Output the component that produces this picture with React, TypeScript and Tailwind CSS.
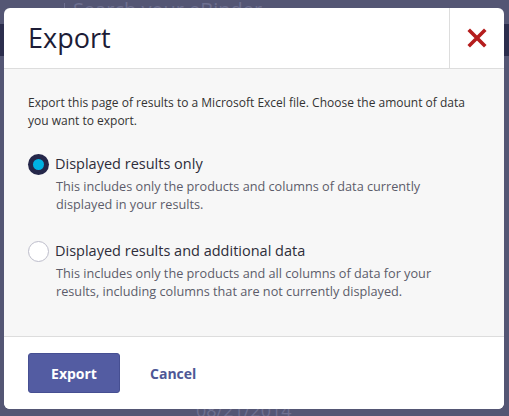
import React, { useState } from 'react';

const options = [
  {
    id: 'displayed',
    label: 'Displayed results only',
    description:
      'This includes only the products and columns of data currently displayed in your results.',
  },
  {
    id: 'all',
    label: 'Displayed results and additional data',
    description:
      'This includes only the products and all columns of data for your results, including columns that are not currently displayed.',
  },
];

const App: React.FC = () => {
  const [selected, setSelected] = useState('displayed');

  return (
    <div className="relative h-[416px] w-[509px] overflow-hidden bg-[#545674] font-['Open_Sans',sans-serif]">
      {/* Page behind the overlay */}
      <div className="flex h-[24px] items-center gap-3 pl-[40px] text-[20px] text-[#6e7090]">
        <span className="text-[12px]">▼</span>
        <span className="h-[18px] w-px bg-[#6e7090]" />
        <span className="-ml-1 -mt-1">Search your eBinder</span>
      </div>
      <div className="h-[32px] bg-[#2c2e4d]" />
      <div className="absolute bottom-[-8px] left-[196px] text-[18px] text-[#6e7090]">08/21/2014</div>

      {/* Modal */}
      <div className="absolute left-[4px] top-[8px] flex h-[401px] w-[500px] flex-col overflow-hidden rounded-[6px] bg-white">
        <div className="flex h-[61px] shrink-0 border-b border-[#dddddd]">
          <h1 className="flex flex-1 items-center pl-6 pt-[1px] text-[27px] font-normal text-[#1c1c36]">Export</h1>
          <button className="flex w-[55px] items-center justify-center border-l border-[#dddddd]">
            <svg width="20" height="20" viewBox="0 0 20 20">
              <path d="M3 3 L17 17 M17 3 L3 17" stroke="#b51d1d" strokeWidth="3.6" strokeLinecap="square" />
            </svg>
          </button>
        </div>

        <div className="flex-1 bg-[#f7f7f7] px-6 pt-[25px]">
          <p className="text-[12px] leading-[18px] text-[#333333]">
            Export this page of results to a Microsoft Excel file. Choose the amount of data you want to export.
          </p>
          <div className="mt-[23px] flex flex-col gap-[27px]">
            {options.map((o) => {
              const on = selected === o.id;
              return (
                <label key={o.id} className="flex cursor-pointer gap-[6px]" onClick={() => setSelected(o.id)}>
                  <span
                    className={`mt-[1px] flex h-[21px] w-[21px] shrink-0 items-center justify-center rounded-full ${
                      on ? 'bg-[#25274a]' : 'border border-[#bdbdcb] bg-white'
                    }`}
                  >
                    {on && <span className="h-[11px] w-[11px] rounded-full bg-[#00b2e3]" />}
                  </span>
                  <span className="flex flex-col">
                    <span className="text-[14.5px] leading-[22px] text-[#2d2d3a]">{o.label}</span>
                    <span className="mt-[2px] max-w-[400px] pl-[1px] text-[12.7px] leading-[18px] text-[#5c5c6a]">
                      {o.description}
                    </span>
                  </span>
                </label>
              );
            })}
          </div>
        </div>

        <div className="flex h-[73px] shrink-0 items-start gap-[30px] border-t border-[#dddddd] bg-white pl-6 pt-[16px]">
          <button className="h-[40px] w-[92px] rounded-[3px] border border-[#464f92] bg-[#535ca2] text-[14px] font-bold text-white">
            Export
          </button>
          <button className="h-[40px] text-[14px] font-bold text-[#4e5796]">Cancel</button>
        </div>
      </div>
    </div>
  );
};

export default App;
